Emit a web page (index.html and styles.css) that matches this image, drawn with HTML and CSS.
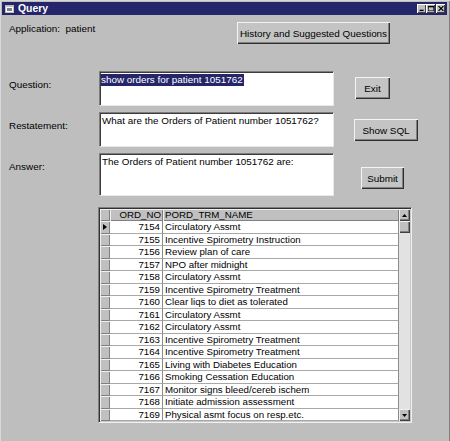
FILE: index.html
```html
<!DOCTYPE html>
<html>
<head>
<meta charset="utf-8">
<link rel="stylesheet" href="styles.css">
</head>
<body>
<div class="window">
  <div class="titlebar">
    <svg class="app-icon" width="9" height="8" viewBox="0 0 9 8">
      <rect x="0.5" y="0.5" width="8" height="7" fill="#fff" stroke="#c0c0c0"/>
      <rect x="0" y="0" width="9" height="2" fill="#c0c0c0"/>
      <rect x="2" y="3" width="5" height="3" fill="#808080"/>
    </svg>
    <span class="title">Query</span>
    <div class="title-buttons">
      <span class="tbtn"><svg width="8" height="7" viewBox="0 0 8 7"><rect x="1" y="5" width="5" height="2" fill="#000"/></svg></span>
      <span class="tbtn"><svg width="8" height="7" viewBox="0 0 8 7"><rect x="0.5" y="0.5" width="7" height="6" fill="none" stroke="#000"/><rect x="0" y="0" width="8" height="2" fill="#000"/></svg></span>
      <span class="tbtn tbtn-close"><svg width="8" height="7" viewBox="0 0 8 7"><path d="M1 0.5 L7 6.5 M7 0.5 L1 6.5" stroke="#000" stroke-width="1.6"/></svg></span>
    </div>
  </div>
  <div class="content">
    <div class="top-row">
      <div class="app-label">Application:&nbsp; patient</div>
      <button class="btn btn-history">History and Suggested Questions</button>
    </div>

    <div class="form-row row-question">
      <div class="label">Question:</div>
      <div class="textbox"><span class="selected">show orders for patient 1051762</span></div>
      <button class="btn btn-exit">Exit</button>
    </div>

    <div class="form-row row-restate">
      <div class="label">Restatement:</div>
      <div class="textbox">What are the Orders of Patient number 1051762?</div>
      <button class="btn btn-sql">Show SQL</button>
    </div>

    <div class="form-row row-answer">
      <div class="label">Answer:</div>
      <div class="textbox textbox-tall">The Orders of Patient number 1051762 are:</div>
      <button class="btn btn-submit">Submit</button>
    </div>

    <div class="datagrid">
      <div class="table">
        <div class="grow header">
          <div class="sel"></div>
          <div class="hcell num">ORD_NO</div>
          <div class="hcell name">PORD_TRM_NAME</div>
        </div>
        <div class="rows">
          <div class="grow"><div class="sel current"><svg width="4" height="6" viewBox="0 0 4 6"><path d="M0 0 L4 3 L0 6 Z" fill="#000"/></svg></div><div class="cell num">7154</div><div class="cell name">Circulatory Assmt</div></div>
          <div class="grow"><div class="sel"></div><div class="cell num">7155</div><div class="cell name">Incentive Spirometry Instruction</div></div>
          <div class="grow"><div class="sel"></div><div class="cell num">7156</div><div class="cell name">Review plan of care</div></div>
          <div class="grow"><div class="sel"></div><div class="cell num">7157</div><div class="cell name">NPO after midnight</div></div>
          <div class="grow"><div class="sel"></div><div class="cell num">7158</div><div class="cell name">Circulatory Assmt</div></div>
          <div class="grow"><div class="sel"></div><div class="cell num">7159</div><div class="cell name">Incentive Spirometry Treatment</div></div>
          <div class="grow"><div class="sel"></div><div class="cell num">7160</div><div class="cell name">Clear liqs to diet as tolerated</div></div>
          <div class="grow"><div class="sel"></div><div class="cell num">7161</div><div class="cell name">Circulatory Assmt</div></div>
          <div class="grow"><div class="sel"></div><div class="cell num">7162</div><div class="cell name">Circulatory Assmt</div></div>
          <div class="grow"><div class="sel"></div><div class="cell num">7163</div><div class="cell name">Incentive Spirometry Treatment</div></div>
          <div class="grow"><div class="sel"></div><div class="cell num">7164</div><div class="cell name">Incentive Spirometry Treatment</div></div>
          <div class="grow"><div class="sel"></div><div class="cell num">7165</div><div class="cell name">Living with Diabetes Education</div></div>
          <div class="grow"><div class="sel"></div><div class="cell num">7166</div><div class="cell name">Smoking Cessation Education</div></div>
          <div class="grow"><div class="sel"></div><div class="cell num">7167</div><div class="cell name">Monitor signs bleed/cereb ischem</div></div>
          <div class="grow"><div class="sel"></div><div class="cell num">7168</div><div class="cell name">Initiate admission assessment</div></div>
          <div class="grow"><div class="sel"></div><div class="cell num">7169</div><div class="cell name">Physical asmt focus on resp.etc.</div></div>
        </div>
      </div>
      <div class="vscroll">
        <div class="sbtn"><svg width="5" height="3" viewBox="0 0 5 3"><path d="M2.5 0 L5 3 L0 3 Z" fill="#000"/></svg></div>
        <div class="thumb"></div>
        <div class="track"></div>
        <div class="sbtn"><svg width="5" height="3" viewBox="0 0 5 3"><path d="M0 0 L5 0 L2.5 3 Z" fill="#000"/></svg></div>
      </div>
    </div>
  </div>
</div>
</body>
</html>
```

FILE: styles.css
```css
html, body {
  margin: 0;
  padding: 0;
  background: #bebebe;
}

.window {
  box-sizing: border-box;
  width: 450px;
  height: 441px;
  padding: 2px 3px 0 2px;
  background: #bebebe;
  font-family: "Liberation Sans", Arial, sans-serif;
  font-size: 9.9px;
  color: #000;
  overflow: hidden;
  box-shadow: inset 1px 1px #d8d8d8, inset -1px 0 #808080;
}

.titlebar {
  height: 13px;
  background: #25256a;
  display: flex;
  align-items: center;
  color: #fff;
}

.app-icon {
  margin-left: 3px;
  margin-right: 4px;
}

.title {
  font-weight: bold;
  font-size: 10.4px;
  line-height: 13px;
}

.title-buttons {
  margin-left: auto;
  display: flex;
  margin-right: 2px;
}

.tbtn {
  box-sizing: border-box;
  width: 9px;
  height: 9px;
  background: #c0c0c0;
  display: flex;
  align-items: center;
  justify-content: center;
  box-shadow: inset 1px 1px #fff, inset -1px -1px #404040;
  overflow: hidden;
}

.tbtn svg { transform: scale(0.8); }

.tbtn-close { margin-left: 1px; }

.content {
  padding-left: 7px;
}

.top-row {
  display: flex;
  margin-top: 7px;
  height: 22px;
}

.app-label {
  width: 228px;
  padding-top: 1px;
  line-height: 12px;
}

.btn {
  box-sizing: border-box;
  height: 22px;
  padding: 0;
  margin: 0;
  background: #c4c4c4;
  border: none;
  font-family: "Liberation Sans", Arial, sans-serif;
  font-size: 9.9px;
  color: #000;
  box-shadow: inset 1px 1px #f4f4f4, inset -1px -1px #303030, inset -2px -2px #808080;
  text-align: center;
}

.btn-history { width: 153px; }

.form-row {
  display: flex;
  align-items: flex-start;
}

.row-question { margin-top: 27px; }
.row-restate { margin-top: 6px; }
.row-answer { margin-top: 6px; }

.label {
  width: 90px;
  padding-top: 8px;
  line-height: 12px;
}

.textbox {
  box-sizing: border-box;
  width: 235px;
  height: 35px;
  background: #fff;
  padding: 2px 2px;
  line-height: 12px;
  border-top: 1px solid #7c7c7c;
  border-left: 1px solid #7c7c7c;
  border-right: 1px solid #e8e8e8;
  border-bottom: 1px solid #e8e8e8;
  box-shadow: inset 1px 1px #3c3c3c;
}

.textbox-tall { height: 43px; }

.selected {
  background: #25256a;
  color: #fff;
  padding: 0 1px 0 0;
  display: inline-block;
  line-height: 12px;
  margin-left: -1px;
  margin-top: -1px;
}

.btn-exit { width: 35px; margin-left: 21px; margin-top: 6px; }
.btn-sql { width: 64px; margin-left: 20px; margin-top: 7px; }
.btn-submit { width: 43px; margin-left: 27px; margin-top: 14px; }

.datagrid {
  box-sizing: border-box;
  width: 314px;
  height: 216px;
  margin-top: 11px;
  margin-left: 89px;
  display: flex;
  border-top: 1px solid #808080;
  border-left: 1px solid #808080;
  border-right: 1px solid #f0f0f0;
  border-bottom: 1px solid #f0f0f0;
  box-shadow: inset 1px 1px #303030, inset -1px -1px #c8c8c8;
  padding: 1px;
  background: #bebebe;
}

.table {
  flex: 1;
  display: flex;
  flex-direction: column;
  overflow: hidden;
  font-size: 9.7px;
}

.grow {
  display: grid;
  grid-template-columns: 10px 53px 1fr;
  height: 12.5px;
  line-height: 12.5px;
}

.header {
  height: 12px;
  line-height: 12px;
  flex: none;
}

.rows {
  flex: 1;
  overflow: hidden;
}

.sel {
  box-sizing: border-box;
  background: #c0c0c0;
  box-shadow: inset 1px 1px #f0f0f0, inset -1px -1px #808080;
  display: flex;
  align-items: center;
  justify-content: center;
}

.hcell {
  box-sizing: border-box;
  background: #c0c0c0;
  box-shadow: inset 1px 1px #f0f0f0, inset -1px -1px #808080;
  white-space: nowrap;
  overflow: hidden;
}

.cell {
  box-sizing: border-box;
  background: #fff;
  border-right: 1px solid #8c8c8c;
  border-bottom: 1px solid #a8a8a8;
  white-space: nowrap;
  overflow: hidden;
}

.num {
  text-align: right;
  padding-right: 2px;
}

.name {
  text-align: left;
  padding-left: 2px;
}

.vscroll {
  width: 11px;
  display: flex;
  flex-direction: column;
}

.sbtn, .thumb {
  box-sizing: border-box;
  height: 12px;
  flex: none;
  background: #c0c0c0;
  box-shadow: inset 1px 1px #f0f0f0, inset -1px -1px #404040, inset -2px -2px #808080;
  display: flex;
  align-items: center;
  justify-content: center;
}

.track {
  flex: 1;
  background: #e2e2e2;
}
```
